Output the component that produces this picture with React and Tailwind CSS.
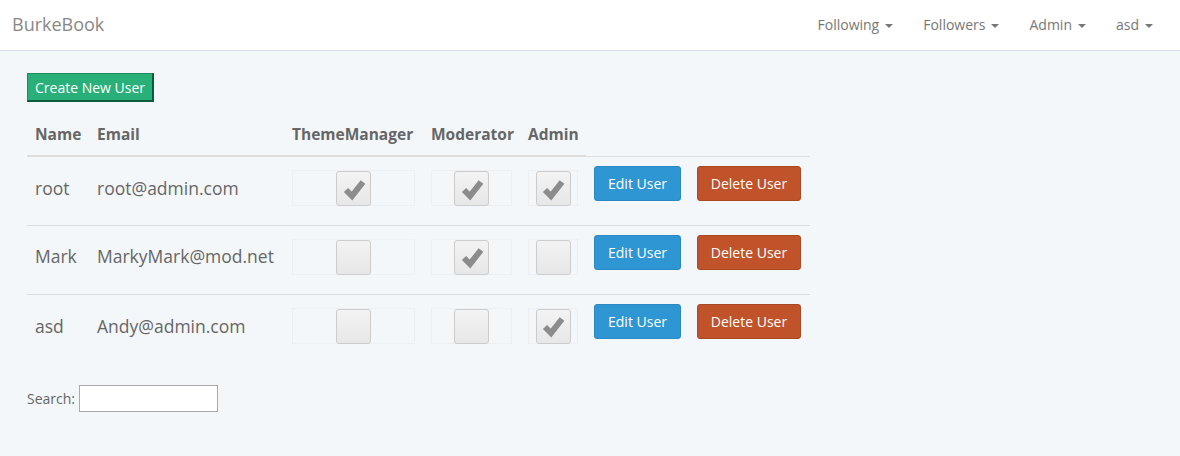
import React from 'react';

const users = [
  { name: 'root', email: 'root@admin.com', theme: true, mod: true, admin: true },
  { name: 'Mark', email: 'MarkyMark@mod.net', theme: false, mod: true, admin: false },
  { name: 'asd', email: 'Andy@admin.com', theme: false, mod: false, admin: true },
];

function Caret() {
  return <span className="inline-block ml-1.5 align-middle border-t-[4px] border-t-current border-x-[4px] border-x-transparent"></span>;
}

function Check({ on }) {
  return (
    <div className="flex justify-center border border-[#edf0f3] h-[36px]">
      <div className="w-[35px] h-[35px] rounded-[3px] border border-[#cccccc] bg-gradient-to-b from-[#f3f3f3] to-[#e7e7e7] flex items-center justify-center">
        {on && (
          <svg width="26" height="26" viewBox="0 0 26 26">
            <path d="M5 14 L11 20 L22 6" fill="none" stroke="#8c8c8c" strokeWidth="6" strokeLinejoin="miter" />
          </svg>
        )}
      </div>
    </div>
  );
}

export default function App() {
  return (
    <div className="min-h-screen bg-[#f3f7fa] text-[#666] font-['Open_Sans','Lato',sans-serif]">
      {/* Navbar */}
      <nav className="h-[51px] bg-white border-b border-[#d5dee8] flex items-center justify-between">
        <span className="pl-3 pb-[2px] text-[18px] text-[#888]">BurkeBook</span>
        <ul className="flex items-center text-[14px] text-[#777] pr-3 pb-[2px]">
          <li className="px-[15px]">Following<Caret /></li>
          <li className="px-[15px]">Followers<Caret /></li>
          <li className="px-[15px]">Admin<Caret /></li>
          <li className="px-[15px]">asd<Caret /></li>
        </ul>
      </nav>

      <main className="px-[27px] pt-[22px]">
        <button className="h-[29px] px-[7px] bg-[#28b078] text-white text-[14px] border border-[#1c8a5a] border-r-2 border-b-2 border-r-[#0c5b3a] border-b-[#0c5b3a]">
          Create New User
        </button>

        <table className="mt-[18px] w-[783px] table-fixed border-collapse text-left">
          <thead>
            <tr className="text-[15.5px] font-semibold text-[#666] whitespace-nowrap">
              <th className="w-[62px] px-2 h-[36px] pb-[6px] border-b-2 border-[#dddddd]">Name</th>
              <th className="w-[195px] px-2 pb-[6px] border-b-2 border-[#dddddd]">Email</th>
              <th className="w-[139px] px-2 pb-[6px] border-b-2 border-[#dddddd]">ThemeManager</th>
              <th className="w-[97px] px-2 pb-[6px] border-b-2 border-[#dddddd]">Moderator</th>
              <th className="w-[66px] px-2 pb-[6px] border-b-2 border-[#dddddd]">Admin</th>
              <th className="w-[224px] px-2 border-b border-[#dddddd]"></th>
            </tr>
          </thead>
          <tbody>
            {users.map((u, i) => (
              <tr key={u.name} className={`h-[69px] text-[17.5px] whitespace-nowrap ${i > 0 ? 'border-t border-[#dddddd]' : ''}`}>
                <td className="px-2 align-middle pb-[6px]">{u.name}</td>
                <td className="px-2 align-middle pb-[6px]">{u.email}</td>
                <td className="px-2 align-top pt-[13px]"><Check on={u.theme} /></td>
                <td className="px-2 align-top pt-[13px]"><Check on={u.mod} /></td>
                <td className="px-2 align-top pt-[13px]"><Check on={u.admin} /></td>
                <td className="px-2 align-top pt-[9px]">
                  <div className="flex gap-4">
                    <button className="w-[87px] h-[35px] rounded-[3px] bg-[#2e96d3] border border-[#2a88c2] text-white text-[14px]">Edit User</button>
                    <button className="w-[104px] h-[35px] rounded-[3px] bg-[#c0532a] border border-[#a94824] text-white text-[14px]">Delete User</button>
                  </div>
                </td>
              </tr>
            ))}
          </tbody>
        </table>

        <div className="mt-[22px] flex items-center text-[14px] text-[#666]">
          <label>Search:</label>
          <input className="ml-[4px] w-[139px] h-[27px] bg-white border border-[#aaaaaa]" />
        </div>
      </main>
    </div>
  );
}
